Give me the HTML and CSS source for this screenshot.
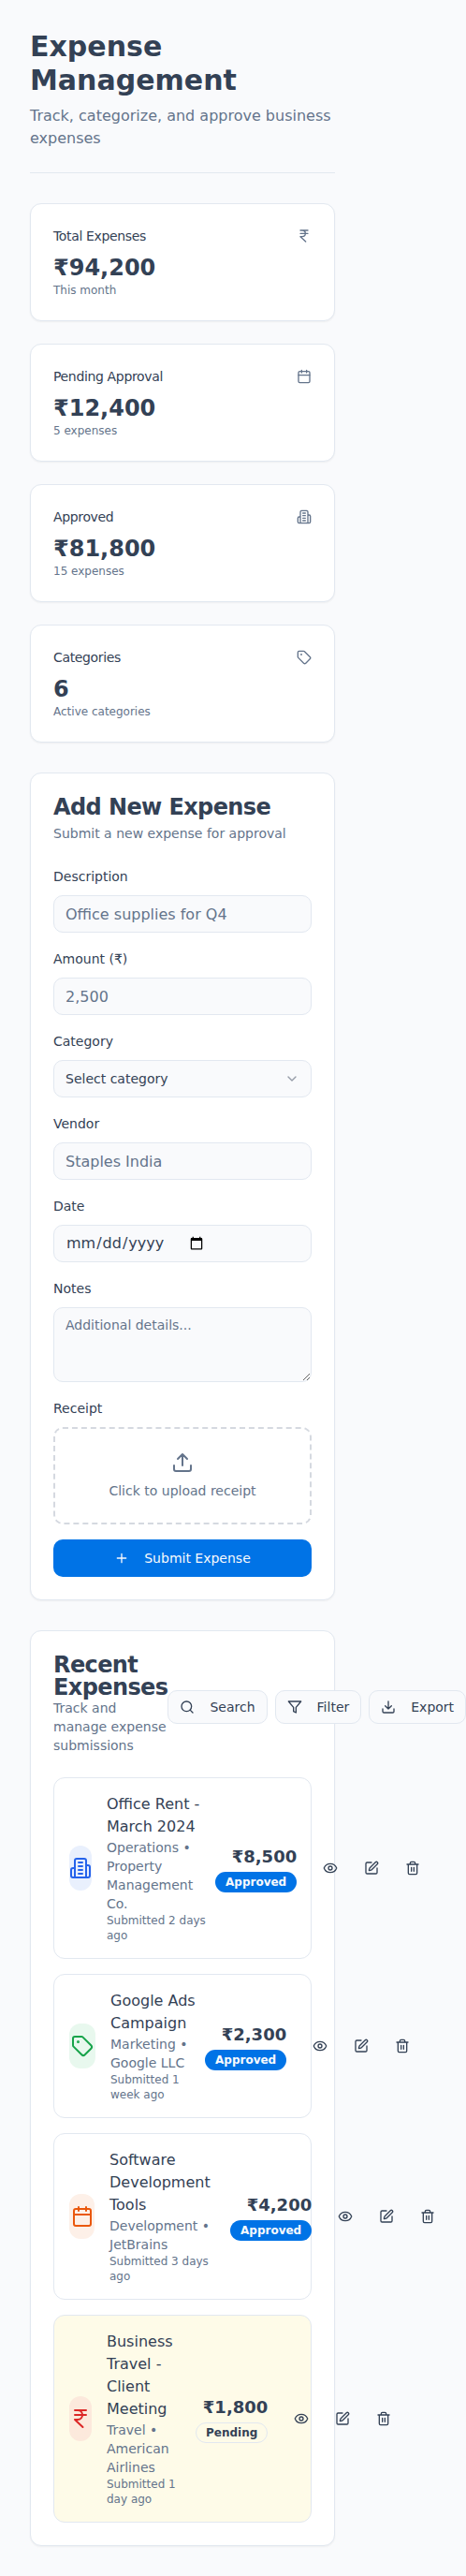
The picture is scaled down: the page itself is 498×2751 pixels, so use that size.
FILE: index.html
```html
<!DOCTYPE html>
<html lang="en">
<head>
<meta charset="utf-8">
<title>Expense Management</title>
<link rel="stylesheet" href="styles.css">
</head>
<body>
<svg class="sprite" xmlns="http://www.w3.org/2000/svg">
  <symbol id="rupee" viewBox="0 0 24 24"><path d="M6 3h12M6 8h12M6 13l8.5 8M6 13h3M9 13c6.667 0 6.667-10 0-10"/></symbol>
  <symbol id="calendar" viewBox="0 0 24 24"><path d="M8 2v4M16 2v4M3 10h18"/><rect x="3" y="4" width="18" height="18" rx="2"/></symbol>
  <symbol id="building" viewBox="0 0 24 24"><path d="M6 22V4a2 2 0 0 1 2-2h8a2 2 0 0 1 2 2v18ZM6 12H4a2 2 0 0 0-2 2v6a2 2 0 0 0 2 2h2M18 9h2a2 2 0 0 1 2 2v9a2 2 0 0 1-2 2h-2M10 6h4M10 10h4M10 14h4M10 18h4"/></symbol>
  <symbol id="tag" viewBox="0 0 24 24"><path d="M12.586 2.586A2 2 0 0 0 11.172 2H4a2 2 0 0 0-2 2v7.172a2 2 0 0 0 .586 1.414l8.704 8.704a2.426 2.426 0 0 0 3.42 0l6.58-6.58a2.426 2.426 0 0 0 0-3.42z"/><circle cx="7.5" cy="7.5" r=".5" fill="currentColor"/></symbol>
  <symbol id="chevron" viewBox="0 0 24 24"><path d="m6 9 6 6 6-6"/></symbol>
  <symbol id="upload" viewBox="0 0 24 24"><path d="M21 15v4a2 2 0 0 1-2 2H5a2 2 0 0 1-2-2v-4M17 8l-5-5-5 5M12 3v12"/></symbol>
  <symbol id="download" viewBox="0 0 24 24"><path d="M21 15v4a2 2 0 0 1-2 2H5a2 2 0 0 1-2-2v-4M7 10l5 5 5-5M12 15V3"/></symbol>
  <symbol id="plus" viewBox="0 0 24 24"><path d="M5 12h14M12 5v14"/></symbol>
  <symbol id="search" viewBox="0 0 24 24"><circle cx="11" cy="11" r="8"/><path d="m21 21-4.3-4.3"/></symbol>
  <symbol id="filter" viewBox="0 0 24 24"><path d="M22 3H2l8 9.46V19l4 2v-8.54z"/></symbol>
  <symbol id="eye" viewBox="0 0 24 24"><path d="M2.062 12.348a1 1 0 0 1 0-.696 10.75 10.75 0 0 1 19.876 0 1 1 0 0 1 0 .696 10.75 10.75 0 0 1-19.876 0"/><circle cx="12" cy="12" r="3"/></symbol>
  <symbol id="edit" viewBox="0 0 24 24"><path d="M12 3H5a2 2 0 0 0-2 2v14a2 2 0 0 0 2 2h14a2 2 0 0 0 2-2v-7"/><path d="M18.375 2.625a1 1 0 0 1 3 3l-9.013 9.014a2 2 0 0 1-.853.505l-2.873.84a.5.5 0 0 1-.62-.62l.84-2.873a2 2 0 0 1 .506-.852z"/></symbol>
  <symbol id="trash" viewBox="0 0 24 24"><path d="M3 6h18M19 6v14c0 1-1 2-2 2H7c-1 0-2-1-2-2V6M8 6V4c0-1 1-2 2-2h4c1 0 2 1 2 2v2M10 11v6M14 11v6"/></symbol>
</svg>
<main class="page">
  <header class="page-header">
    <h1>Expense Management</h1>
    <p>Track, categorize, and approve business expenses</p>
  </header>

  <section class="stats">
    <article class="card stat">
      <div class="stat-head"><span>Total Expenses</span><svg class="icon"><use href="#rupee"/></svg></div>
      <div class="stat-value">₹94,200</div><div class="stat-note">This month</div>
    </article>
    <article class="card stat">
      <div class="stat-head"><span>Pending Approval</span><svg class="icon"><use href="#calendar"/></svg></div>
      <div class="stat-value">₹12,400</div><div class="stat-note">5 expenses</div>
    </article>
    <article class="card stat">
      <div class="stat-head"><span>Approved</span><svg class="icon"><use href="#building"/></svg></div>
      <div class="stat-value">₹81,800</div><div class="stat-note">15 expenses</div>
    </article>
    <article class="card stat">
      <div class="stat-head"><span>Categories</span><svg class="icon"><use href="#tag"/></svg></div>
      <div class="stat-value">6</div><div class="stat-note">Active categories</div>
    </article>
  </section>

  <section class="card form-card">
    <h2>Add New Expense</h2>
    <p class="card-desc">Submit a new expense for approval</p>
    <form class="form">
      <div class="field"><label for="desc">Description</label><input class="control" id="desc" placeholder="Office supplies for Q4"></div>
      <div class="field"><label for="amount">Amount (₹)</label><input class="control" id="amount" placeholder="2,500"></div>
      <div class="field"><label>Category</label><button type="button" class="control select"><span>Select category</span><svg class="icon"><use href="#chevron"/></svg></button></div>
      <div class="field"><label for="vendor">Vendor</label><input class="control" id="vendor" placeholder="Staples India"></div>
      <div class="field"><label for="date">Date</label><input class="control date" id="date" type="date"></div>
      <div class="field"><label for="notes">Notes</label><textarea class="control notes" id="notes" placeholder="Additional details..."></textarea></div>
      <div class="field"><label>Receipt</label>
        <div class="dropzone"><svg class="icon icon-lg"><use href="#upload"/></svg><p>Click to upload receipt</p></div>
      </div>
      <button type="button" class="submit"><svg class="icon"><use href="#plus"/></svg>Submit Expense</button>
    </form>
  </section>

  <section class="card recent">
    <div class="recent-head">
      <div class="recent-title"><h2>Recent Expenses</h2><p class="card-desc">Track and manage expense submissions</p></div>
      <div class="toolbar">
        <button class="tool"><svg class="icon"><use href="#search"/></svg>Search</button>
        <button class="tool"><svg class="icon"><use href="#filter"/></svg>Filter</button>
        <button class="tool"><svg class="icon"><use href="#download"/></svg>Export</button>
      </div>
    </div>
    <div class="expenses">
      <article class="expense rent">
        <div class="info">
          <div class="badge-icon blue"><svg class="icon icon-lg"><use href="#building"/></svg></div>
          <div class="text"><h3>Office Rent - March 2024</h3><p class="meta">Operations • Property Management Co.</p><p class="when">Submitted 2 days ago</p></div>
        </div>
        <div class="side">
          <div class="amount"><strong>₹8,500</strong><span class="pill">Approved</span></div>
          <div class="actions"><button><svg class="icon"><use href="#eye"/></svg></button><button><svg class="icon"><use href="#edit"/></svg></button><button><svg class="icon"><use href="#trash"/></svg></button></div>
        </div>
      </article>
      <article class="expense ads">
        <div class="info">
          <div class="badge-icon green"><svg class="icon icon-lg"><use href="#tag"/></svg></div>
          <div class="text"><h3>Google Ads Campaign</h3><p class="meta">Marketing • Google LLC</p><p class="when">Submitted 1 week ago</p></div>
        </div>
        <div class="side">
          <div class="amount"><strong>₹2,300</strong><span class="pill">Approved</span></div>
          <div class="actions"><button><svg class="icon"><use href="#eye"/></svg></button><button><svg class="icon"><use href="#edit"/></svg></button><button><svg class="icon"><use href="#trash"/></svg></button></div>
        </div>
      </article>
      <article class="expense software">
        <div class="info">
          <div class="badge-icon orange"><svg class="icon icon-lg"><use href="#calendar"/></svg></div>
          <div class="text"><h3>Software Development Tools</h3><p class="meta">Development • JetBrains</p><p class="when">Submitted 3 days ago</p></div>
        </div>
        <div class="side">
          <div class="amount"><strong>₹4,200</strong><span class="pill">Approved</span></div>
          <div class="actions"><button><svg class="icon"><use href="#eye"/></svg></button><button><svg class="icon"><use href="#edit"/></svg></button><button><svg class="icon"><use href="#trash"/></svg></button></div>
        </div>
      </article>
      <article class="expense travel">
        <div class="info">
          <div class="badge-icon red"><svg class="icon icon-lg"><use href="#rupee"/></svg></div>
          <div class="text"><h3>Business Travel - Client Meeting</h3><p class="meta">Travel • American Airlines</p><p class="when">Submitted 1 day ago</p></div>
        </div>
        <div class="side">
          <div class="amount"><strong>₹1,800</strong><span class="pill outline">Pending</span></div>
          <div class="actions"><button><svg class="icon"><use href="#eye"/></svg></button><button><svg class="icon"><use href="#edit"/></svg></button><button><svg class="icon"><use href="#trash"/></svg></button></div>
        </div>
      </article>
    </div>
  </section>
</main>
</body>
</html>
```
FILE: styles.css
```css
* { box-sizing: border-box; margin: 0; padding: 0; }
:root {
  --bg: #f9fafc;
  --text: #334155;
  --muted: #64748b;
  --border: #e2e8f0;
  --primary: #0073e6;
}
body {
  background: var(--bg);
  color: var(--text);
  font: 16px/24px "DejaVu Sans", sans-serif;
}
button, input, textarea { font: inherit; color: inherit; }
button { border: 0; background: none; }
.sprite { position: absolute; width: 0; height: 0; }
.icon {
  width: 16px; height: 16px; flex-shrink: 0; display: block;
  fill: none; stroke: currentColor; stroke-width: 2;
  stroke-linecap: round; stroke-linejoin: round;
}
.icon-lg { width: 24px; height: 24px; }

.page { width: 390px; padding: 32px; display: flex; flex-direction: column; gap: 32px; }
.page-header { border-bottom: 1px solid var(--border); padding-bottom: 24px; }
.page-header h1 { font-size: 30px; line-height: 36px; font-weight: 700; }
.page-header p { margin-top: 8px; color: var(--muted); }

.card {
  background: #fff; border: 1px solid var(--border); border-radius: 12px;
  box-shadow: 0 1px 2px rgba(0, 0, 0, 0.05);
}
.stats { display: grid; gap: 24px; }
.stat { height: 126px; padding: 24px; }
.stat-head { display: flex; align-items: center; justify-content: space-between; height: 20px; font-size: 14px; letter-spacing: -0.35px; margin-bottom: 8px; }
.stat-head .icon { color: var(--muted); }
.stat-value { font-size: 24px; line-height: 32px; font-weight: 700; }
.stat-note { font-size: 12px; line-height: 16px; color: var(--muted); }

.form-card, .recent { padding: 24px; }
h2 { font-size: 24px; line-height: 24px; font-weight: 700; letter-spacing: -0.6px; }
.card-desc { font-size: 14px; line-height: 20px; color: var(--muted); }
.form-card .card-desc { margin-top: 6px; }
.form { margin-top: 24px; display: flex; flex-direction: column; gap: 16px; }
.field { display: flex; flex-direction: column; gap: 8px; font-size: 14px; line-height: 24px; }
.control {
  width: 100%; height: 40px; padding: 8px 12px; font-size: 16px; line-height: 24px;
  background: var(--bg); border: 1px solid var(--border); border-radius: 10px;
}
.control::placeholder { color: var(--muted); }
.date { display: flex; }
.select { display: flex; align-items: center; justify-content: space-between; font-size: 14px; }
.select .icon { opacity: 0.5; }
.notes { height: 80px; font-size: 14px; line-height: 20px; display: block; }
.dropzone {
  height: 104px; border: 2px dashed #d5d9e0; border-radius: 10px; color: var(--muted);
  display: flex; flex-direction: column; align-items: center; justify-content: center; gap: 8px; line-height: 20px;
}
.submit {
  height: 40px; border-radius: 10px; background: var(--primary); color: #f8fafc;
  font-size: 14px; display: flex; align-items: center; justify-content: center; gap: 16px;
}

.recent-head { display: flex; align-items: center; justify-content: space-between; }
.recent-title { flex: 1 1 0; min-width: min-content; }
.toolbar { display: flex; gap: 8px; flex-shrink: 0; margin-top: 6px; }
.tool {
  height: 36px; padding: 0 12px; border: 1px solid var(--border); border-radius: 10px;
  background: var(--bg); font-size: 14px; display: flex; align-items: center; gap: 16px;
}
.expenses { margin-top: 24px; display: flex; flex-direction: column; gap: 16px; }
.expense {
  border: 1px solid var(--border); border-radius: 12px; padding: 16px;
  display: flex; align-items: center; justify-content: space-between;
}
.info { display: flex; align-items: center; gap: 16px; flex-shrink: 0; }
.badge-icon { height: 48px; width: 24px; border-radius: 12px; flex-shrink: 0; display: flex; align-items: center; justify-content: center; }
.blue { background: #e9f0fd; color: #2563eb; }
.green { background: #e8f8ee; color: #16a34a; width: 28px; }
.orange { background: #fdf0e8; color: #ea580c; width: 27px; }
.red { background: #fce9dc; color: #dc2626; }
h3 { font-size: 16px; line-height: 24px; font-weight: 400; }
.meta { font-size: 14px; line-height: 20px; color: var(--muted); }
.when { font-size: 12px; line-height: 16px; color: var(--muted); }
.side { display: flex; align-items: center; gap: 16px; flex-shrink: 0; }
.amount { display: flex; flex-direction: column; align-items: flex-end; gap: 2px; }
.amount strong { font-size: 18px; line-height: 28px; }
.pill {
  height: 22px; padding: 0 10px; border: 1px solid transparent; border-radius: 11px;
  background: var(--primary); color: #f8fafc;
  font-size: 12px; line-height: 20px; font-weight: 600;
}
.pill.outline { background: transparent; border-color: var(--border); color: var(--text); }
.actions { display: flex; gap: 4px; }
.actions button { width: 40px; height: 36px; display: flex; align-items: center; justify-content: center; }
.travel { background: #fefbe8; }
.rent .info { width: 156px; }
.ads .info { width: 145px; }
.software .info { width: 172px; }
.travel .info { width: 135px; }
```
